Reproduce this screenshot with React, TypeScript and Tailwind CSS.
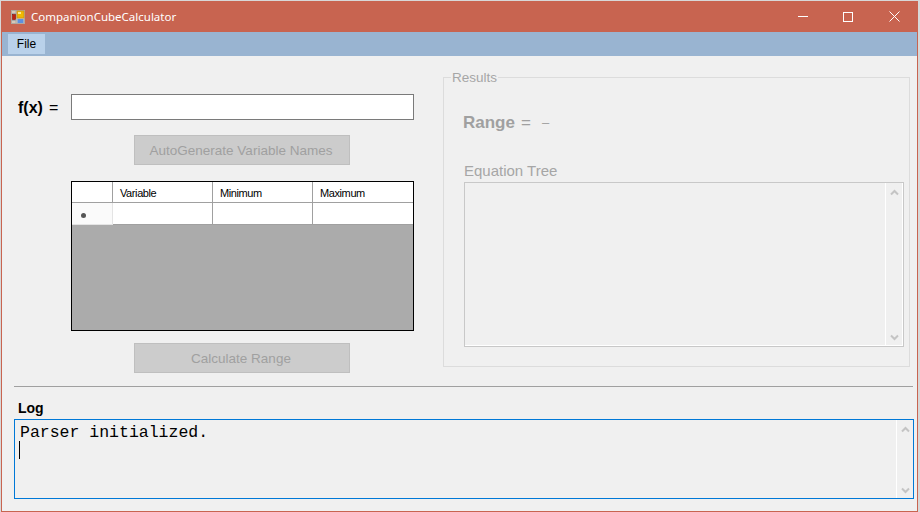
const sans = "font-['Liberation_Sans',Arial,sans-serif]";

function Chevron({ up, className }: { up?: boolean; className?: string }) {
  return (
    <svg width="9" height="7" viewBox="0 0 9 7" className={className}>
      <path
        d={up ? "M1 5.5 L4.5 2 L8 5.5" : "M1 1.5 L4.5 5 L8 1.5"}
        fill="none"
        stroke="#c4c4c4"
        strokeWidth="2"
      />
    </svg>
  );
}

function ScrollTrack() {
  return (
    <div className="w-[17px] border-l border-white flex flex-col items-center justify-between pt-[6px] pb-[4px] shrink-0">
      <Chevron up />
      <Chevron />
    </div>
  );
}

function AppIcon() {
  return (
    <svg width="14" height="14" viewBox="0 0 14 14">
      <rect x="0.5" y="0.5" width="13" height="13" fill="#d8c8b8" stroke="#b0a8a0" />
      <path d="M0.5 3.5 H5 M5 0.5 V13.5 M0.5 10.5 H5" stroke="#a8a8a8" fill="none" />
      <rect x="6" y="1" width="7" height="7" fill="#f0b800" stroke="#c89020" strokeWidth="0.8" />
      <rect x="7" y="2" width="3" height="2" fill="#ffe890" />
      <rect x="6.5" y="9" width="6" height="4" fill="#5c90e0" />
      <rect x="1.5" y="4.5" width="3" height="5" fill="#c02010" stroke="#801008" strokeWidth="0.6" />
    </svg>
  );
}

function GridCell({ children, className }: { children?: string; className?: string }) {
  return (
    <div className={`flex items-center pl-[7px] pt-[2px] text-[11px] tracking-[-0.4px] text-black border-r border-b border-[#a0a0a0] ${className ?? ""}`}>
      {children}
    </div>
  );
}

function DisabledButton({ children }: { children: string }) {
  return (
    <button
      type="button"
      disabled
      className="w-[216px] h-[30px] pt-[2px] pr-[2px] bg-[#cccccc] border border-[#bfbfbf] text-[13.5px] text-[#a0a0a0] ml-[127px]"
    >
      {children}
    </button>
  );
}

export default function App() {
  return (
    <div className={`w-[920px] h-[512px] overflow-hidden bg-[#d8d8d8] pt-[1px] pl-[1px] pr-[2px] ${sans}`}>
      <div className="w-[917px] h-[511px] border border-t-0 border-[#c86450] bg-[#f0f0f0] flex flex-col">
        {/* Title bar */}
        <div className="h-[31px] bg-[#c86450] flex items-center text-white shrink-0">
          <div className="ml-[9px] flex">
            <AppIcon />
          </div>
          <span className="ml-[6px] text-[11.5px] font-['Noto_Sans',sans-serif]">CompanionCubeCalculator</span>
          <div className="ml-auto flex items-center">
            <div className="w-[46px] pl-[2px] flex justify-center">
              <div className="w-[10px] h-px bg-white" />
            </div>
            <div className="w-[46px] flex justify-center">
              <div className="w-[10px] h-[10px] border border-white" />
            </div>
            <div className="w-[46px] flex justify-center">
              <svg width="11" height="11" viewBox="0 0 11 11">
                <path d="M0.5 0.5 L10.5 10.5 M10.5 0.5 L0.5 10.5" stroke="white" strokeWidth="1" />
              </svg>
            </div>
          </div>
        </div>

        {/* Menu bar */}
        <div className="h-[24px] bg-[#99b4d1] flex items-center pl-[6px] shrink-0">
          <div className="h-[20px] w-[37px] bg-[#b9d1ea] flex items-center justify-center text-[12px] text-black">File</div>
        </div>

        {/* Main area */}
        <div className="flex items-start h-[330px] pt-[21px] shrink-0">
          {/* Left column */}
          <div className="w-[413px] ml-[5px] mr-[23px] shrink-0">
            <div className="h-[26px] mt-[17px] flex items-center">
              <span className="w-[64px] pl-[11px] pt-[2px] text-[16px] text-black whitespace-nowrap">
                <b>f(x)</b>
                <span className="ml-[6px]">=</span>
              </span>
              <div className="w-[343px] h-[26px] bg-white border border-[#7a7a7a]" />
            </div>
            <div className="mt-[15px]">
              <DisabledButton>AutoGenerate Variable Names</DisabledButton>
            </div>
            <div className="mt-[16px] ml-[64px] w-[343px] h-[150px] bg-[#ababab] border border-black flex flex-col">
              <div className="grid grid-cols-[41px_100px_100px_1fr] bg-white">
                <GridCell className="h-[21px]" />
                <GridCell className="h-[21px]">Variable</GridCell>
                <GridCell className="h-[21px]">Minimum</GridCell>
                <GridCell className="h-[21px] border-r-0">Maximum</GridCell>
                <div className="h-[22px] flex items-center pl-[9px] pt-[3px] bg-[#fafafa] border-r border-b border-[#e4e4e4]">
                  <span className="w-[5px] h-[5px] rounded-full bg-[#555555]" />
                </div>
                <GridCell className="h-[22px]" />
                <GridCell className="h-[22px]" />
                <GridCell className="h-[22px] border-r-0" />
              </div>
            </div>
            <div className="mt-[12px]">
              <DisabledButton>Calculate Range</DisabledButton>
            </div>
          </div>

          {/* Results group */}
          <fieldset className="w-[467px] h-[297px] border border-[#dcdcdc] -mt-[7px] pl-[19px] pr-[5px] shrink-0">
            <legend className="-ml-[12px] px-[1px] text-[13.5px] leading-[15px] text-[#a6a6a6]">Results</legend>
            <div className="h-[24px] mt-[26px] flex items-center text-[#a0a0a0]">
              <b className="text-[17px]">Range</b>
              <span className="ml-[6px] text-[17px]">=</span>
              <span className="ml-[11px] text-[13px]">–</span>
            </div>
            <div className="mt-[28px] ml-[1px] text-[15px] leading-[16px] text-[#a6a6a6]">Equation Tree</div>
            <div className="mt-[3px] ml-[1px] w-[440px] h-[165px] border border-[#c8c8c8] flex justify-end">
              <div className="flex-1 flex justify-end border-r border-b border-white">
                <ScrollTrack />
              </div>
            </div>
          </fieldset>
        </div>

        {/* Separator */}
        <div className="ml-[12px] mr-[4px] h-px bg-[#a0a0a0] shrink-0" />

        {/* Log */}
        <div className="ml-[12px] mr-[3px] mt-[13px] flex flex-col">
          <span className="text-[14px] leading-[16px] font-bold text-black pl-[4px]">Log</span>
          <div className="mt-[3px] h-[80px] border border-[#0078d7] flex">
            <div className="flex-1 pl-[5px] pt-[4px] font-['Liberation_Mono',monospace] text-[16.5px] leading-[17px] text-black">
              <div>Parser initialized.</div>
              <div className="w-px h-[18px] bg-black -ml-px" />
            </div>
            <ScrollTrack />
          </div>
        </div>
      </div>
    </div>
  );
}
